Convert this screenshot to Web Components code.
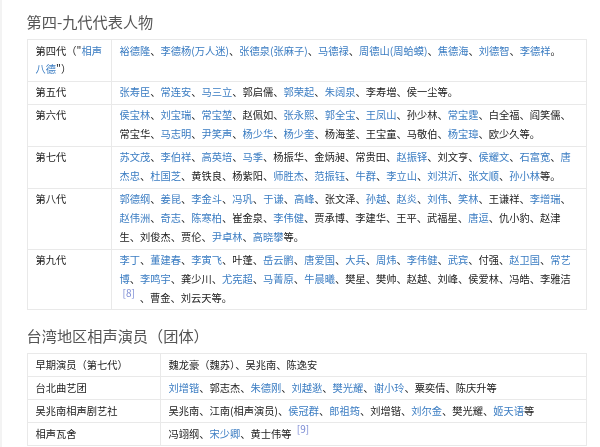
<!DOCTYPE html>
<html lang="zh">
<head>
<meta charset="utf-8">
<style>
  html, body { margin: 0; background: #fff; }
  body {
    width: 600px;
    height: 447px;
    overflow: hidden;
    font-family: "Noto Sans CJK SC", "Liberation Sans", sans-serif;
    font-size: 10.25px;
    color: #222;
  }
</style>
</head>
<body>
<wiki-page>
  <wiki-heading>第四-九代代表人物</wiki-heading>
  <wiki-table style="--label-width: 84px">
    <wiki-row>
      <span slot="label">第四代（"<wiki-link>相声<br>八德</wiki-link>"）</span>
      <wiki-link>裕德隆</wiki-link>、<wiki-link>李德杨(万人迷)</wiki-link>、<wiki-link>张德泉(张麻子)</wiki-link>、<wiki-link>马德禄</wiki-link>、<wiki-link>周德山(周蛤蟆)</wiki-link>、<wiki-link>焦德海</wiki-link>、<wiki-link>刘德智</wiki-link>、<wiki-link>李德祥</wiki-link>。
    </wiki-row>
    <wiki-row>
      <span slot="label">第五代</span>
      <wiki-link>张寿臣</wiki-link>、<wiki-link>常连安</wiki-link>、<wiki-link>马三立</wiki-link>、郭启儒、<wiki-link>郭荣起</wiki-link>、<wiki-link>朱阔泉</wiki-link>、李寿増、侯一尘等。
    </wiki-row>
    <wiki-row>
      <span slot="label">第六代</span>
      <wiki-link>侯宝林</wiki-link>、<wiki-link>刘宝瑞</wiki-link>、<wiki-link>常宝堃</wiki-link>、赵佩如、<wiki-link>张永熙</wiki-link>、<wiki-link>郭全宝</wiki-link>、<wiki-link>王凤山</wiki-link>、孙少林、<wiki-link>常宝霆</wiki-link>、白全福、阎笑儒、<br>常宝华、<wiki-link>马志明</wiki-link>、<wiki-link>尹笑声</wiki-link>、<wiki-link>杨少华</wiki-link>、<wiki-link>杨少奎</wiki-link>、杨海荃、王宝童、马敬伯、<wiki-link>杨宝璋</wiki-link>、欧少久等。
    </wiki-row>
    <wiki-row>
      <span slot="label">第七代</span>
      <wiki-link>苏文茂</wiki-link>、<wiki-link>李伯祥</wiki-link>、<wiki-link>高英培</wiki-link>、<wiki-link>马季</wiki-link>、杨振华、金炳昶、常贵田、<wiki-link>赵振铎</wiki-link>、刘文亨、<wiki-link>侯耀文</wiki-link>、<wiki-link>石富宽</wiki-link>、<wiki-link>唐<br>杰忠</wiki-link>、<wiki-link>杜国芝</wiki-link>、黄铁良、杨紫阳、<wiki-link>师胜杰</wiki-link>、<wiki-link>范振钰</wiki-link>、<wiki-link>牛群</wiki-link>、<wiki-link>李立山</wiki-link>、<wiki-link>刘洪沂</wiki-link>、<wiki-link>张文顺</wiki-link>、<wiki-link>孙小林</wiki-link>等。
    </wiki-row>
    <wiki-row>
      <span slot="label">第八代</span>
      <wiki-link>郭德纲</wiki-link>、<wiki-link>姜昆</wiki-link>、<wiki-link>李金斗</wiki-link>、<wiki-link>冯巩</wiki-link>、<wiki-link>于谦</wiki-link>、<wiki-link>高峰</wiki-link>、张文泽、<wiki-link>孙越</wiki-link>、<wiki-link>赵炎</wiki-link>、<wiki-link>刘伟</wiki-link>、<wiki-link>笑林</wiki-link>、王谦祥、<wiki-link>李增瑞</wiki-link>、<br><wiki-link>赵伟洲</wiki-link>、<wiki-link>奇志</wiki-link>、<wiki-link>陈寒柏</wiki-link>、崔金泉、<wiki-link>李伟健</wiki-link>、贾承博、李建华、王平、武福星、<wiki-link>唐逗</wiki-link>、仇小豹、赵津<br>生、刘俊杰、贾伦、<wiki-link>尹卓林</wiki-link>、<wiki-link>高晓攀</wiki-link>等。
    </wiki-row>
    <wiki-row>
      <span slot="label">第九代</span>
      <wiki-link>李丁</wiki-link>、<wiki-link>董建春</wiki-link>、<wiki-link>李寅飞</wiki-link>、叶蓬、<wiki-link>岳云鹏</wiki-link>、<wiki-link>唐爱国</wiki-link>、<wiki-link>大兵</wiki-link>、<wiki-link>周炜</wiki-link>、<wiki-link>李伟健</wiki-link>、<wiki-link>武宾</wiki-link>、付强、<wiki-link>赵卫国</wiki-link>、<wiki-link>常艺<br>博</wiki-link>、<wiki-link>李鸣宇</wiki-link>、龚少川、<wiki-link>尤宪超</wiki-link>、<wiki-link>马菁原</wiki-link>、<wiki-link>牛晨曦</wiki-link>、樊星、樊帅、赵越、刘峰、侯爱林、冯皓、李雅洁<br><wiki-ref>[8]</wiki-ref>、曹金、刘云天等。
    </wiki-row>
  </wiki-table>

  <wiki-heading second>台湾地区相声演员（团体）</wiki-heading>
  <wiki-table style="--label-width: 133px">
    <wiki-row>
      <span slot="label">早期演员（第七代）</span>
      魏龙豪（魏苏）、吴兆南、陈逸安
    </wiki-row>
    <wiki-row>
      <span slot="label">台北曲艺团</span>
      <wiki-link>刘增锴</wiki-link>、郭志杰、<wiki-link>朱德刚</wiki-link>、<wiki-link>刘越逖</wiki-link>、<wiki-link>樊光耀</wiki-link>、<wiki-link>谢小玲</wiki-link>、粟奕倩、陈庆升等
    </wiki-row>
    <wiki-row>
      <span slot="label">吴兆南相声剧艺社</span>
      吴兆南、江南(相声演员)、<wiki-link>侯冠群</wiki-link>、<wiki-link>郎祖筠</wiki-link>、刘增锴、<wiki-link>刘尔金</wiki-link>、樊光耀、<wiki-link>姬天语</wiki-link>等
    </wiki-row>
    <wiki-row>
      <span slot="label">相声瓦舍</span>
      冯翊纲、<wiki-link>宋少卿</wiki-link>、黄士伟等 <wiki-ref>[9]</wiki-ref>
    </wiki-row>
  </wiki-table>
</wiki-page>

<script>
const pageTemplate = document.createElement('template')
pageTemplate.innerHTML = `
  <style>
    :host {
      display: block;
      padding: 0 13.5px 0 24.5px;
      border-left: 2px solid #f3f3f3;
      height: 447px;
      overflow: hidden;
      box-sizing: border-box;
      filter: blur(0.3px);
    }
  </style>
  <slot></slot>
`
class WikiPage extends HTMLElement {
  constructor() {
    super()
    this.attachShadow({ mode: 'open' })
    this.shadowRoot.appendChild(pageTemplate.content.cloneNode(true))
  }
}

const headingTemplate = document.createElement('template')
headingTemplate.innerHTML = `
  <style>
    :host {
      display: block;
      font-size: 15.2px;
      line-height: 22px;
      padding: 10px 0 7px;
      color: #555;
    }
    :host([second]) {
      padding: 14px 0 7px;
    }
  </style>
  <slot></slot>
`
class WikiHeading extends HTMLElement {
  constructor() {
    super()
    this.attachShadow({ mode: 'open' })
    this.shadowRoot.appendChild(headingTemplate.content.cloneNode(true))
  }
}

const tableTemplate = document.createElement('template')
tableTemplate.innerHTML = `
  <style>
    :host {
      display: block;
      border: 1px solid #e9e9e9;
      border-bottom: 0;
    }
  </style>
  <slot></slot>
`
class WikiTable extends HTMLElement {
  constructor() {
    super()
    this.attachShadow({ mode: 'open' })
    this.shadowRoot.appendChild(tableTemplate.content.cloneNode(true))
  }
}

const rowTemplate = document.createElement('template')
rowTemplate.innerHTML = `
  <style>
    :host {
      display: grid;
      grid-template-columns: var(--label-width) 1fr;
      border-bottom: 1px solid #e9e9e9;
      line-height: 18.9px;
    }
    .label {
      padding: 1.55px 0 1.55px 8px;
      border-right: 1px solid #e9e9e9;
    }
    .value {
      padding: 1.55px 8px;
    }
  </style>
  <div class="label"><slot name="label"></slot></div>
  <div class="value"><slot></slot></div>
`
class WikiRow extends HTMLElement {
  constructor() {
    super()
    this.attachShadow({ mode: 'open' })
    this.shadowRoot.appendChild(rowTemplate.content.cloneNode(true))
  }
}

// inline elements: no whitespace around the slot, it would show up as a gap after each name
const linkTemplate = document.createElement('template')
linkTemplate.innerHTML = `<style>:host { color: #3a7cc2; }</style><slot></slot>`
class WikiLink extends HTMLElement {
  constructor() {
    super()
    this.attachShadow({ mode: 'open' })
    this.shadowRoot.appendChild(linkTemplate.content.cloneNode(true))
  }
}

const refTemplate = document.createElement('template')
refTemplate.innerHTML = `<style>:host { color: #7a8ad4; font-size: 10px; vertical-align: 5px; line-height: 0; padding: 0 5px 0 3px; }</style><slot></slot>`
class WikiRef extends HTMLElement {
  constructor() {
    super()
    this.attachShadow({ mode: 'open' })
    this.shadowRoot.appendChild(refTemplate.content.cloneNode(true))
  }
}

customElements.define('wiki-page', WikiPage)
customElements.define('wiki-heading', WikiHeading)
customElements.define('wiki-table', WikiTable)
customElements.define('wiki-row', WikiRow)
customElements.define('wiki-link', WikiLink)
customElements.define('wiki-ref', WikiRef)
</script>
</body>
</html>
